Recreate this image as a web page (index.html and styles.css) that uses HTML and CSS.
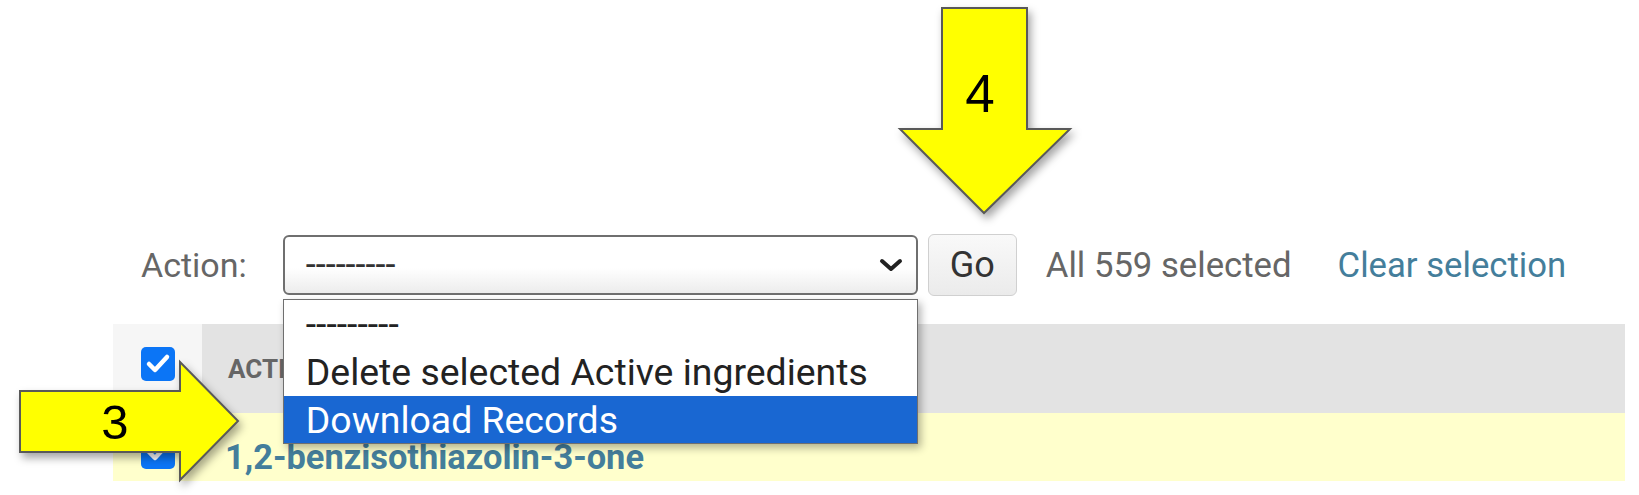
FILE: index.html
```html
<!DOCTYPE html>
<html lang="en">
<head>
    <meta charset="UTF-8">
    <title>Select active ingredient to change</title>
    <link rel="stylesheet" href="styles.css">
</head>
<body>
    <div class="page">
        <div class="actions">
            <label class="action-label">Action:</label>
            <div class="select-wrap">
                <div class="select">
                    <span>---------</span>
                    <svg class="chevron" width="24" height="14" viewBox="0 0 24 14">
                        <path d="M3 3 L12 11 L21 3" fill="none" stroke="#222" stroke-width="4" stroke-linecap="round" stroke-linejoin="round"/>
                    </svg>
                </div>
                <ul class="options">
                    <li>---------</li>
                    <li>Delete selected Active ingredients</li>
                    <li class="active">Download Records</li>
                </ul>
            </div>
            <button class="go">Go</button>
            <span class="count">All 559 selected</span>
            <a class="clear" href="#">Clear selection</a>
        </div>

        <table class="results">
            <thead>
                <tr>
                    <th class="check"><span class="cb"><svg width="34" height="34" viewBox="0 0 34 34"><path d="M8 17 L14 23 L26 10" fill="none" stroke="#fff" stroke-width="4.5" stroke-linecap="round" stroke-linejoin="round"/></svg></span></th>
                    <th class="name">Active ingredient</th>
                </tr>
            </thead>
            <tbody>
                <tr class="selected">
                    <td class="check"><span class="cb"><svg width="34" height="34" viewBox="0 0 34 34"><path d="M8 17 L14 23 L26 10" fill="none" stroke="#fff" stroke-width="4.5" stroke-linecap="round" stroke-linejoin="round"/></svg></span></td>
                    <td class="name"><a href="#">1,2-benzisothiazolin-3-one</a></td>
                </tr>
            </tbody>
        </table>

        <!-- callout arrows -->
        <svg class="arrow arrow-down" width="210" height="235" viewBox="0 0 210 235">
            <polygon points="62,8 147,8 147,129 190,129 104,213 20,129 62,129" fill="#ffff00" stroke="#595959" stroke-width="2"/>
            <text x="100" y="112" text-anchor="middle">4</text>
        </svg>
        <svg class="arrow arrow-right" width="260" height="155" viewBox="0 0 260 155">
            <polygon points="20,51 180,51 180,22 238,81 180,140 180,112 20,112" fill="#ffff00" stroke="#595959" stroke-width="2"/>
            <text x="115" y="99" text-anchor="middle">3</text>
        </svg>
    </div>
</body>
</html>
```

FILE: styles.css
```css
* {
    margin: 0;
    padding: 0;
    box-sizing: border-box;
}
body {
    font-family: Roboto, 'Liberation Sans', Arial, sans-serif;
    background: #fff;
    color: #333;
}
.page {
    position: relative;
    height: 495px;
    padding: 234px 14px 0 113px;
    overflow: hidden;
}
.actions {
    display: flex;
    align-items: center;
    height: 62px;
    padding-left: 28px;
}
.action-label {
    font-size: 34px;
    color: #666;
    margin-right: 36px;
}
.select-wrap {
    position: relative;
    width: 635px;
    margin-right: 10px;
}
.select {
    height: 60px;
    display: flex;
    align-items: center;
    justify-content: space-between;
    padding: 0 13px 0 21px;
    border: 2px solid #6f6f6f;
    border-radius: 6px;
    background: linear-gradient(#fff 55%, #ececec);
    font-size: 36px;
    color: #333;
}
.chevron {
    display: block;
}
.options {
    position: absolute;
    left: 0;
    top: 64px;
    width: 635px;
    list-style: none;
    background: #fff;
    border: 1px solid #6f6f6f;
    box-shadow: 3px 4px 8px rgba(0, 0, 0, 0.3);
    z-index: 10;
}
.options li {
    height: 48px;
    line-height: 48px;
    padding-left: 22px;
    font-size: 37.4px;
    color: #222;
    white-space: nowrap;
}
.options li.active {
    height: 47px;
    background: #1967d2;
    color: #fff;
}
.go {
    width: 89px;
    height: 62px;
    border: 1px solid #d0d0d0;
    border-radius: 6px;
    background: linear-gradient(#f9f9f9, #ebebeb);
    font-family: inherit;
    font-size: 36px;
    color: #333;
    margin-right: 29px;
}
.count {
    font-size: 34.7px;
    color: #666;
    margin-right: 46px;
}
.clear {
    font-size: 34.7px;
    color: #447e9b;
    text-decoration: none;
}
.results {
    width: 1512px;
    margin-top: 28px;
    border-collapse: collapse;
}
.results th {
    height: 89px;
    vertical-align: top;
    background: #e3e3e3;
    text-align: left;
}
.results th.check {
    width: 89px;
    background: #f6f6f6;
    padding: 23px 0 0 28px;
}
.results th.name {
    padding: 30px 0 0 26px;
    font-size: 26px;
    line-height: 30px;
    font-weight: 700;
    color: #666;
    text-transform: uppercase;
}
.results td {
    height: 68px;
    vertical-align: top;
    background: #ffffcc;
}
.results td.check {
    padding: 22px 0 0 28px;
}
.results td.name {
    padding: 26px 0 0 23px;
    font-size: 34.4px;
    line-height: 36px;
    white-space: nowrap;
}
.results td.name a {
    color: #447e9b;
    font-weight: 700;
    text-decoration: none;
}
.cb {
    display: block;
    width: 34px;
    height: 34px;
    border-radius: 5px;
    background: #0b75f6;
}
.cb svg {
    display: block;
}
.arrow {
    position: absolute;
    filter: drop-shadow(3px 5px 4px rgba(0, 0, 0, 0.35));
    z-index: 20;
}
.arrow text {
    font-family: 'Liberation Sans', Arial, sans-serif;
    fill: #000;
}
.arrow-down {
    left: 880px;
    top: 0;
}
.arrow-down text {
    font-size: 53px;
}
.arrow-right {
    left: 0;
    top: 340px;
}
.arrow-right text {
    font-size: 49px;
}
```
